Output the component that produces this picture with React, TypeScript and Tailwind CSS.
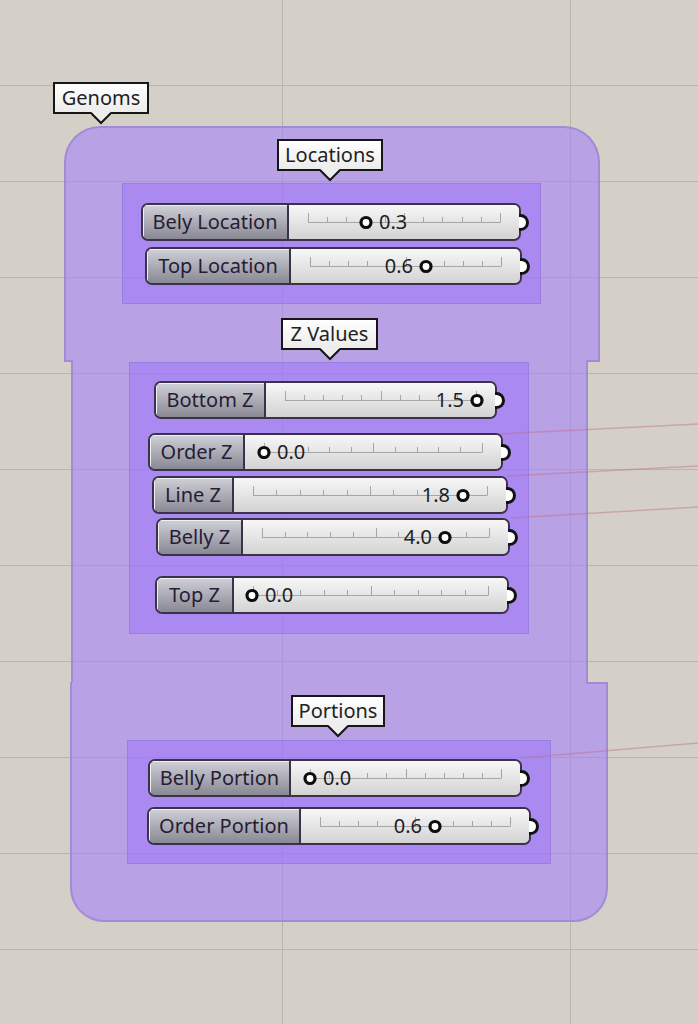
import React from "react";

type Slider = {
  name: string;
  value: string;
  row: string;   // margins inside the group
  pill: string;  // full width of the slider
  label: string; // width of the name part
  bw: number;    // inner width of the value part
  knob: number;  // knob centre, from the left of the value part
  textLeft: boolean;
};

const locations: Slider[] = [
  { name: "Bely Location", value: "0.3", row: "ml-[18px] mt-[19px]", pill: "w-[380px]", label: "w-[146px]", bw: 230, knob: 77, textLeft: false },
  { name: "Top Location", value: "0.6", row: "ml-[22px] mt-[6px]", pill: "w-[377px]", label: "w-[144px]", bw: 229, knob: 135, textLeft: true },
];

const zValues: Slider[] = [
  { name: "Bottom Z", value: "1.5", row: "ml-[24px] mt-[18px]", pill: "w-[343px]", label: "w-[110px]", bw: 229, knob: 211, textLeft: true },
  { name: "Order Z", value: "0.0", row: "ml-[18px] mt-[14px]", pill: "w-[355px]", label: "w-[95px]", bw: 256, knob: 19, textLeft: false },
  { name: "Line Z", value: "1.8", row: "ml-[22px] mt-[5px]", pill: "w-[356px]", label: "w-[80px]", bw: 272, knob: 229, textLeft: true },
  { name: "Belly Z", value: "4.0", row: "ml-[26px] mt-[4px]", pill: "w-[354px]", label: "w-[85px]", bw: 265, knob: 202, textLeft: true },
  { name: "Top Z", value: "0.0", row: "ml-[25px] mt-[20px]", pill: "w-[354px]", label: "w-[77px]", bw: 273, knob: 18, textLeft: false },
];

const portions: Slider[] = [
  { name: "Belly Portion", value: "0.0", row: "ml-[20px] mt-[18px]", pill: "w-[374px]", label: "w-[141px]", bw: 229, knob: 19, textLeft: false },
  { name: "Order Portion", value: "0.6", row: "ml-[19px] mt-[10px]", pill: "w-[384px]", label: "w-[152px]", bw: 228, knob: 134, textLeft: true },
];

const Scribble = ({ text, className }: { text: string; className: string }) => (
  <div
    className={`relative h-[32px] border-2 border-[#161616] bg-linear-to-b from-white to-[#ececec] flex items-center justify-center text-[20px] leading-none text-[#222] ${className}`}
  >
    {text}
    <svg className="absolute left-1/2 -translate-x-1/2 top-[28px]" width="20" height="13" viewBox="0 0 20 13">
      <polygon points="0,0 20,0 10,10" fill="#ededed" />
      <polyline points="0,1 10,11 20,1" fill="none" stroke="#161616" strokeWidth="2" />
    </svg>
  </div>
);

const SliderRow = ({ s }: { s: Slider }) => {
  const ticks = Array.from({ length: 11 }, (_, i) => 19 + (i * (s.bw - 38)) / 10);
  return (
    <div className={`flex items-center ${s.row}`}>
      <div className={`flex h-[38px] rounded-[7px] border-2 border-[#3a3348] overflow-hidden ${s.pill}`}>
        <div
          className={`${s.label} shrink-0 border-r-2 border-[#3a3348] bg-linear-to-b from-[#d0d0d8] to-[#898995] shadow-[inset_1px_1px_0_#f0f0f4] flex items-center justify-center text-[20px] leading-none text-[#261c34]`}
        >
          {s.name}
        </div>
        <div className="relative flex-1 bg-linear-to-b from-[#f7f7f7] to-[#d3d3d3]">
          <svg className="absolute inset-0" width={s.bw} height="34">
            <line x1={19} y1={17.5} x2={s.bw - 19} y2={17.5} stroke="#a6a6a6" strokeWidth="1" />
            {ticks.map((x, i) => (
              <line
                key={i}
                x1={Math.round(x) + 0.5}
                x2={Math.round(x) + 0.5}
                y1={i === 0 || i === 5 || i === 10 ? 8 : 12}
                y2={17.5}
                stroke="#a6a6a6"
                strokeWidth="1"
              />
            ))}
          </svg>
          <span
            className="absolute top-0 h-[34px] flex items-center text-[20px] leading-none text-[#1d1d24]"
            style={s.textLeft ? { right: s.bw - (s.knob - 13) } : { left: s.knob + 13 }}
          >
            {s.value}
          </span>
          <svg className="absolute inset-0" width={s.bw} height="34">
            <circle cx={s.knob} cy={17.5} r={5} fill="#fff" stroke="#0d0d0d" strokeWidth="3.2" />
          </svg>
        </div>
      </div>
      <div className="-ml-[2px] w-[10px] h-[17px] rounded-r-full border-[3px] border-l-0 border-[#111] bg-white" />
    </div>
  );
};

export default function App() {
  return (
    <div className="relative w-[698px] h-[1024px] overflow-hidden pt-[82px] font-['Noto_Sans',sans-serif] bg-[#d4d0c8] bg-[linear-gradient(to_right,#b9b5ad_1px,transparent_1px),linear-gradient(to_bottom,#b9b5ad_1px,transparent_1px)] bg-[size:288px_96px] bg-[position:282px_85px]">
      <Scribble text="Genoms" className="ml-[53px] w-[96px]" />

      {/* Genoms group, top part */}
      <div className="mt-[12px] ml-[64px] w-[536px] h-[236px] rounded-t-[36px] border-2 border-b-0 border-[#a18bd6] bg-[rgba(162,122,255,0.55)] pt-[11px]">
        <Scribble text="Locations" className="ml-[211px] w-[106px]" />
        <div className="mt-[12px] ml-[56px] w-[419px] h-[121px] border border-[#9a7ee2] bg-[rgba(150,105,255,0.42)]">
          {locations.map((s) => (
            <SliderRow key={s.name} s={s} />
          ))}
        </div>
        <Scribble text="Z Values" className="mt-[14px] ml-[215px] w-[97px]" />
      </div>

      {/* middle part */}
      <div className="relative ml-[71px] w-[517px] h-[320px] border-x-2 border-[#a18bd6] bg-[rgba(162,122,255,0.55)] before:absolute before:top-[-2px] before:left-[-9px] before:w-[9px] before:h-[2px] before:rounded-bl-[3px] before:bg-[#a18bd6] after:absolute after:top-[-2px] after:right-[-14px] after:w-[14px] after:h-[2px] after:bg-[#a18bd6]">
        <div className="ml-[56px] w-[400px] h-[272px] border border-[#9a7ee2] bg-[rgba(150,105,255,0.42)]">
          {zValues.map((s) => (
            <SliderRow key={s.name} s={s} />
          ))}
        </div>
      </div>

      {/* bottom part */}
      <div className="relative ml-[70px] w-[538px] h-[240px] rounded-b-[34px] border-2 border-t-0 border-[#a18bd6] bg-[rgba(162,122,255,0.55)] pt-[13px] after:absolute after:top-0 after:right-[-2px] after:w-[22px] after:h-[2px] after:bg-[#a18bd6]">
        <Scribble text="Portions" className="ml-[219px] w-[94px]" />
        <div className="mt-[13px] ml-[55px] w-[424px] h-[124px] border border-[#9a7ee2] bg-[rgba(150,105,255,0.42)]">
          {portions.map((s) => (
            <SliderRow key={s.name} s={s} />
          ))}
        </div>
      </div>

      {/* wires */}
      <svg className="absolute inset-0 pointer-events-none" width="698" height="1024">
        <g stroke="rgba(190,110,135,0.45)" strokeWidth="1.5" fill="none">
          <line x1="500" y1="434" x2="698" y2="424" />
          <line x1="507" y1="476" x2="698" y2="466" />
          <line x1="511" y1="518" x2="698" y2="507" />
          <line x1="521" y1="758" x2="698" y2="743" />
        </g>
      </svg>
    </div>
  );
}
